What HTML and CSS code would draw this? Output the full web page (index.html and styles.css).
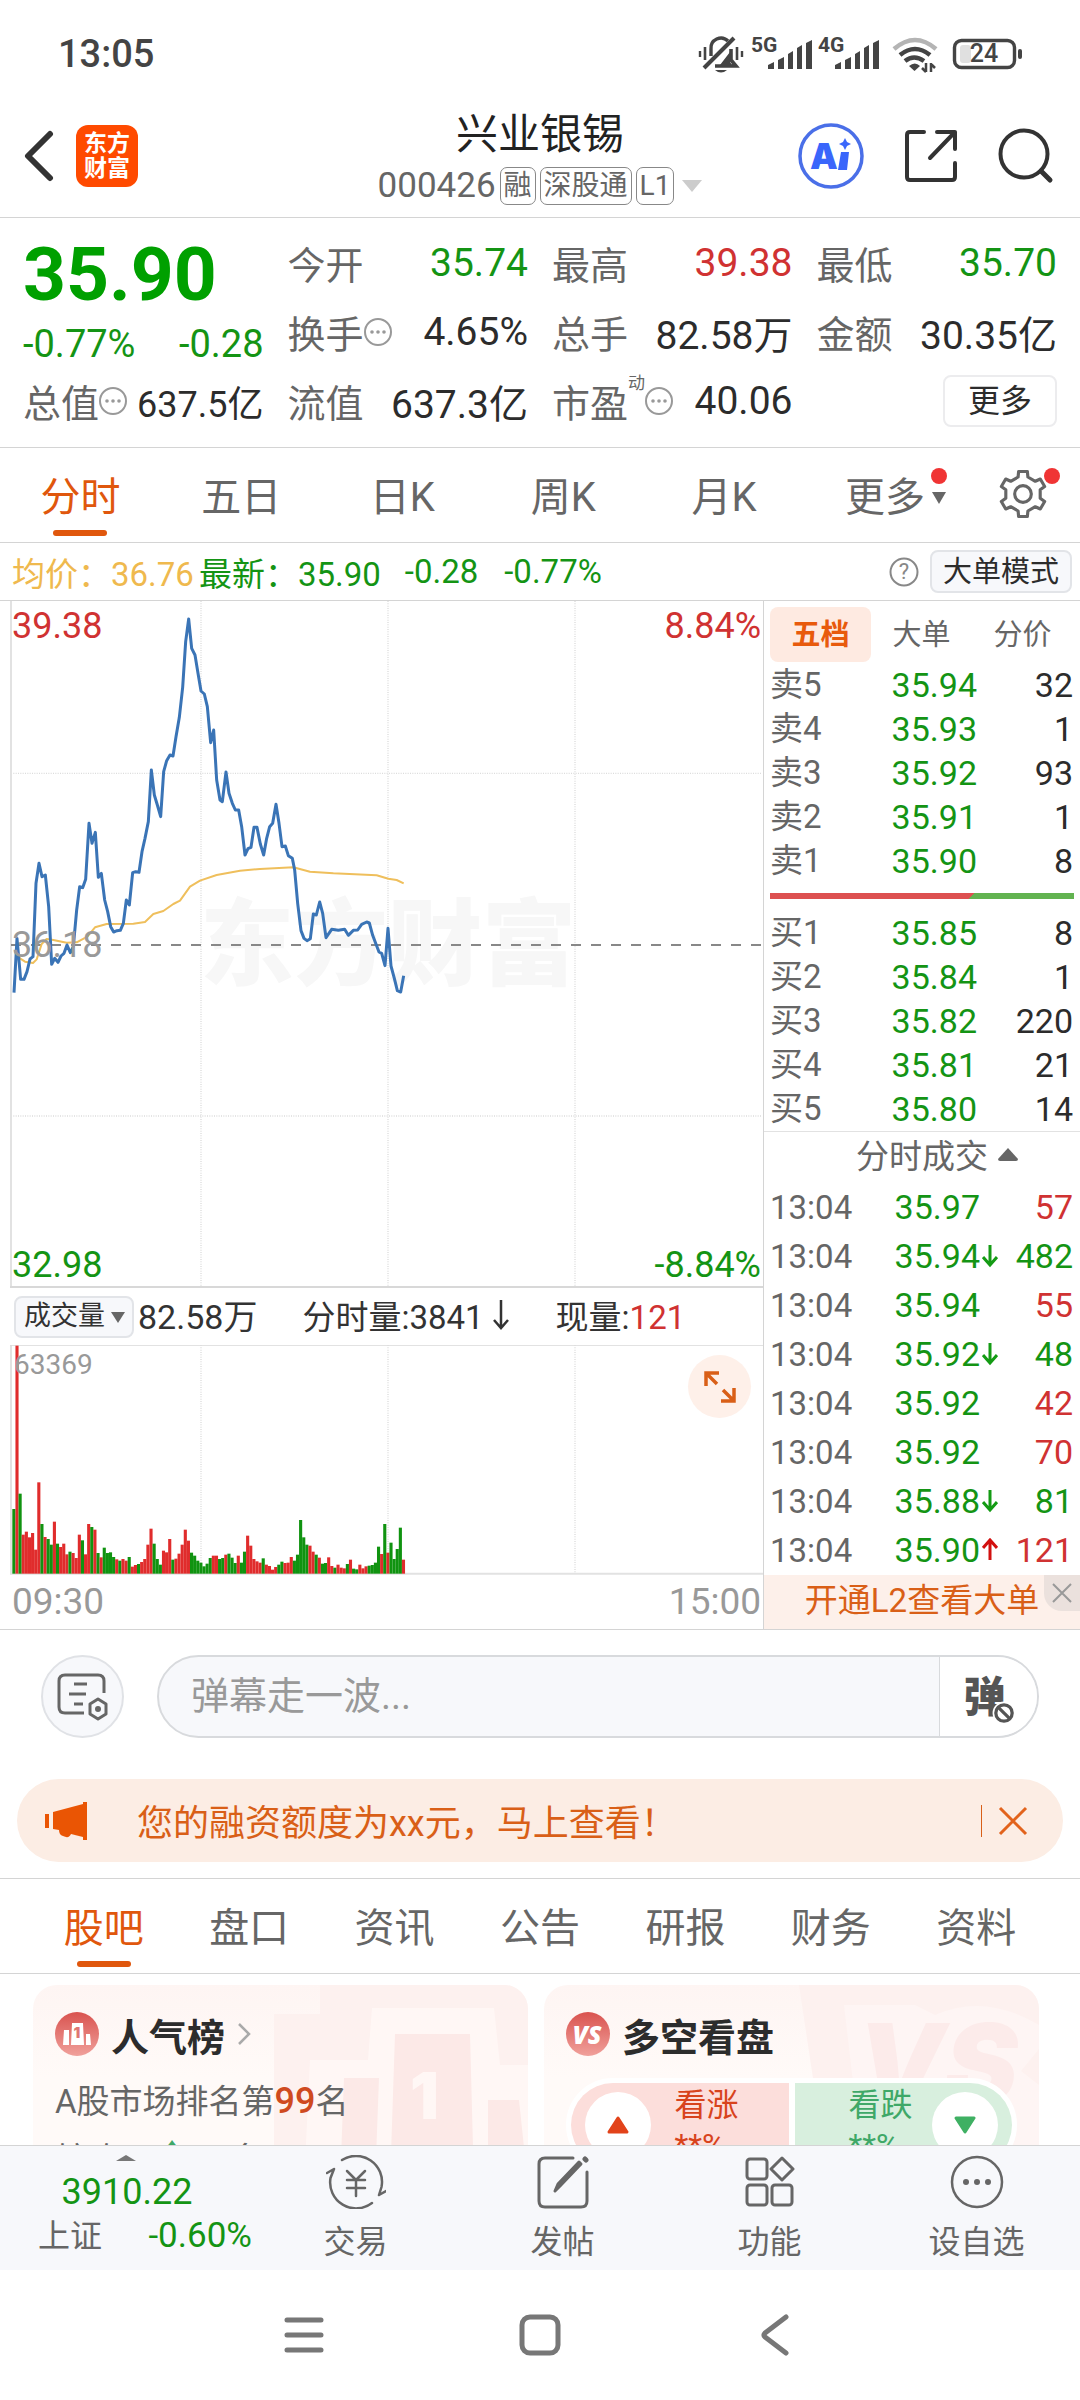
FILE: index.html
```html
<!DOCTYPE html>
<html lang="zh-CN">
<head>
<meta charset="utf-8">
<meta name="viewport" content="width=device-width, initial-scale=1">
<title>兴业银锡 000426</title>
<link rel="stylesheet" href="styles.css">
</head>
<body>
<div class="app">

  <div class="status">
    <span class="status-time">13:05</span>
    <svg class="status-icons" viewBox="0 0 330 40" width="330" height="40" aria-label="静音 5G 4G Wi-Fi 电量24">
      <g fill="none" stroke="#444" stroke-width="3.4" stroke-linecap="butt">
        <path d="M15 22 V15 A10 10 0 0 1 32 7"/>
        <path d="M8 34 L38 4" stroke-width="4"/>
        <path d="M35 15 V26 L40 32 H19" stroke-width="3.600"/>
        <path d="M9 13 v13 M41 13 v13" stroke-width="2.600"/>
        <path d="M4 17 v6 M46 17 v6" stroke-width="2.400"/>
      </g>
      <path d="M34 18 V28 L36 31 H24Z" fill="#444"/>
      <path d="M19 36 h12 q-6 5 -12 0z" fill="#444"/>
      <text x="55" y="18" class="net">5G</text>
      <g fill="#444">
        <path d="M72 31 l6 -3 v7 h-6z M82 26 l6 -3 v12 h-6z M92 20 l5 -3 v18 h-5z M101 14 l5 -3 v24 h-5z M110 9 l6 -3 v29 h-6z"/>
        <path d="M139 31 l6 -3 v7 h-6z M149 26 l6 -3 v12 h-6z M159 20 l5 -3 v18 h-5z M168 14 l5 -3 v24 h-5z M177 9 l6 -3 v29 h-6z"/>
      </g>
      <text x="122" y="18" class="net">4G</text>
      <g fill="none" stroke-width="4.500">
        <path d="M198 15 Q219 -3 240 15" stroke="#b4b4b4"/>
        <path d="M204 21 Q219 9 234 21 M209 27 Q218 20 228 27" stroke="#444"/>
      </g>
      <path d="M213 32 q6 -5 11 0 l-5.500 5z" fill="#444"/>
      <path d="M230 29 v9 M235 29 v9 M226 34 l4 4 M239 34 l-4 -4" stroke="#444" stroke-width="2.500"/>
      <rect x="258.500" y="6.500" width="60" height="27" rx="7" fill="none" stroke="#444" stroke-width="3.400"/>
      <rect x="264" y="11" width="11" height="18" rx="3" fill="#e0e0e0"/>
      <rect x="322" y="15" width="4" height="10" rx="2" fill="#444"/>
      <text x="288" y="28" text-anchor="middle" class="bat">24</text>
    </svg>
  </div>

  <header class="header">
    <div class="header-left">
      <button class="plain" aria-label="返回">
        <svg width="32" height="52" viewBox="0 0 32 52"><path d="M28 4 L6 26 L28 48" fill="none" stroke="#333" stroke-width="6" stroke-linecap="round" stroke-linejoin="round"/></svg>
      </button>
      <a class="logo" href="#">东方<br>财富</a>
    </div>
    <div class="header-title">
      <h1>兴业银锡</h1>
      <div class="code">
        <span>000426</span><span class="tag">融</span><span class="tag">深股通</span><span class="tag">L1</span>
        <svg width="20" height="12" viewBox="0 0 20 12"><path d="M0 0 H20 L10 12Z" fill="#ccc"/></svg>
      </div>
    </div>
    <div class="header-right">
      <button class="plain" aria-label="AI">
        <svg width="66" height="66" viewBox="0 0 66 66">
          <circle cx="33" cy="33" r="31" fill="none" stroke="#4a6fe8" stroke-width="3.500"/>
          <text x="12" y="46" class="ai">A</text>
          <path d="M43 29 h8 l-2 18 h-9z M47 15 l2 4 4 2 -4 2 -2 4 -2 -4 -4 -2 4 -2z" fill="#3a66fb"/>
        </svg>
      </button>
      <button class="plain" aria-label="分享">
        <svg width="54" height="54" viewBox="0 0 54 54" fill="none" stroke="#333" stroke-width="4" stroke-linecap="round" stroke-linejoin="round">
          <path d="M20 3 H6 Q3 3 3 6 V48 Q3 51 6 51 H48 Q51 51 51 48 V34"/>
          <path d="M33 3 H51 V20 M51 3 L26 29"/>
        </svg>
      </button>
      <button class="plain" aria-label="搜索">
        <svg width="56" height="56" viewBox="0 0 56 56" fill="none" stroke="#333" stroke-width="4" stroke-linecap="round">
          <circle cx="26" cy="26" r="23.500"/><path d="M43 43 L52 52" stroke-width="5"/>
        </svg>
      </button>
    </div>
  </header>

  <main class="content">
    <section class="quote">
      <div class="price-block">
        <strong class="last down">35.90</strong>
        <div class="chg down"><span>-0.77%</span><span>-0.28</span></div>
      </div>
      <div class="kv"><span class="k">今开</span><span class="down">35.74</span></div>
      <div class="kv"><span class="k">最高</span><span class="up">39.38</span></div>
      <div class="kv"><span class="k">最低</span><span class="down">35.70</span></div>
      <div class="kv"><span class="k">换手<svg class="info" viewBox="0 0 28 28"><use href="#i-info"/></svg></span><span>4.65%</span></div>
      <div class="kv"><span class="k">总手</span><span>82.58万</span></div>
      <div class="kv"><span class="k">金额</span><span>30.35亿</span></div>
      <div class="kv tight"><span class="k">总值<svg class="info" viewBox="0 0 28 28"><use href="#i-info"/></svg></span><span>637.5亿</span></div>
      <div class="kv"><span class="k">流值</span><span>637.3亿</span></div>
      <div class="kv"><span class="k">市盈<sup>动</sup><svg class="info" viewBox="0 0 28 28"><use href="#i-info"/></svg></span><span>40.06</span></div>
      <div class="more-cell"><button class="more-btn">更多</button></div>
    </section>

    <nav class="periods">
      <button class="tab active">分时</button>
      <button class="tab">五日</button>
      <button class="tab">日K</button>
      <button class="tab">周K</button>
      <button class="tab">月K</button>
      <button class="tab more">更多<span class="more-marks"><i class="dot"></i><svg width="14" height="12" viewBox="0 0 14 12"><path d="M0 0 H14 L7 12Z" fill="#666"/></svg></span></button>
      <button class="tab gear" aria-label="设置">
        <svg width="50" height="50" viewBox="0 0 48 48" fill="none" stroke="#666" stroke-width="3" stroke-linejoin="round">
          <path d="M28.200 2.400 L28.700 7.700 L35.800 11.800 L40.600 9.600 L44.800 16.800 L40.500 19.900 V28.100 L44.800 31.200 L40.600 38.400 L35.800 36.200 L28.700 40.300 L28.200 45.600 H19.800 L19.300 40.300 L12.200 36.200 L7.400 38.400 L3.200 31.200 L7.500 28.100 V19.900 L3.200 16.800 L7.400 9.600 L12.200 11.800 L19.300 7.700 L19.800 2.400Z"/>
          <circle cx="24" cy="24" r="8"/>
        </svg>
        <i class="dot"></i>
      </button>
    </nav>

    <div class="legend">
      <span class="avg">均价：36.76</span>
      <span class="down latest">最新：35.90</span>
      <span class="down">-0.28</span>
      <span class="down">-0.77%</span>
      <svg class="help" width="30" height="30" viewBox="0 0 30 30"><circle cx="15" cy="15" r="13.500" fill="none" stroke="#888" stroke-width="2"/><text x="15" y="22" text-anchor="middle">?</text></svg>
      <button class="mode-btn">大单模式</button>
    </div>

    <section class="board">
      <div class="charts">
        <div class="price-chart">
          <span class="watermark" aria-hidden="true">东方财富</span>
          <svg viewBox="30 33 2259 2061" preserveAspectRatio="none">
            <g fill="none" stroke="#dcdcdc" stroke-width="4">
              <path d="M603 33 V2094 M1164 33 V2094 M1725 33 V2094" stroke-dasharray="3 4"/>
              <path d="M33 550 H2286 M33 1578 H2286" stroke-dasharray="3 4"/>
              <path d="M33 33 V2094" stroke-width="6" stroke="#e2e2e2"/>
              <path d="M30 2091 H2289" stroke-width="6" stroke="#d8d8d8"/>
            </g>
            <path d="M33 1065 H2286" stroke="#888" stroke-width="6" stroke-dasharray="30 30"/>
            <polyline id="avg-line" fill="none" stroke="#efbf5c" stroke-width="6" stroke-linejoin="round"/>
            <polyline id="price-line" fill="none" stroke="#3a74b6" stroke-width="9" stroke-linejoin="round"/>
          </svg>
          <span class="mark top-left up">39.38</span>
          <span class="mark top-right up">8.84%</span>
          <span class="mark mid">36.18</span>
          <span class="mark bottom-left down">32.98</span>
          <span class="mark bottom-right down">-8.84%</span>
        </div>
        <div class="vol-head">
          <span class="picker">
            <select aria-label="指标"><option>成交量</option></select>
            <svg width="14" height="11" viewBox="0 0 14 11"><path d="M0 0 H14 L7 11Z" fill="#666"/></svg>
          </span>
          <span class="v v1">82.58万</span>
          <span class="v v2">分时量:3841<svg width="16" height="30" viewBox="0 0 16 30" fill="none" stroke="#333" stroke-width="2.500"><path d="M8 0 V27 M1 20 L8 28 L15 20"/></svg></span>
          <span class="v v3">现量:<b class="up">121</b></span>
        </div>
        <div class="vol-chart">
          <svg id="vol" viewBox="30 226 2259 690" preserveAspectRatio="none">
            <g fill="none" stroke="#dcdcdc">
              <path d="M603 226 V912 M1164 226 V912 M1725 226 V912" stroke-width="4" stroke-dasharray="3 4"/>
              <path d="M33 226 V912" stroke-width="6" stroke="#e2e2e2"/>
              <path d="M30 227 H2289" stroke-width="3"/>
              <path d="M30 912 H2289" stroke-width="6" stroke="#e2e2e2"/>
            </g>
          </svg>
          <span class="mark vol-max">63369</span>
          <button class="expand" aria-label="全屏">
            <svg width="32" height="32" viewBox="0 0 32 32" fill="none" stroke="#d95f17" stroke-width="3.500"><path d="M2 15 V2 H15 M3 3 L13 13 M30 17 V30 H17 M29 29 L19 19"/></svg>
          </button>
        </div>
        <div class="axis"><span>09:30</span><span>15:00</span></div>
      </div>

      <aside class="side">
        <div class="side-tabs">
          <button class="on">五档</button><button>大单</button><button>分价</button>
        </div>
        <table class="book">
          <tbody>
            <tr><th>卖5</th><td class="down">35.94</td><td>32</td></tr>
            <tr><th>卖4</th><td class="down">35.93</td><td>1</td></tr>
            <tr><th>卖3</th><td class="down">35.92</td><td>93</td></tr>
            <tr><th>卖2</th><td class="down">35.91</td><td>1</td></tr>
            <tr><th>卖1</th><td class="down">35.90</td><td>8</td></tr>
          </tbody>
        </table>
        <div class="ratio"></div>
        <table class="book">
          <tbody>
            <tr><th>买1</th><td class="down">35.85</td><td>8</td></tr>
            <tr><th>买2</th><td class="down">35.84</td><td>1</td></tr>
            <tr><th>买3</th><td class="down">35.82</td><td>220</td></tr>
            <tr><th>买4</th><td class="down">35.81</td><td>21</td></tr>
            <tr><th>买5</th><td class="down">35.80</td><td>14</td></tr>
          </tbody>
        </table>
        <button class="ticks-title">分时成交<svg width="20" height="13" viewBox="0 0 20 13"><path d="M10 0 L20 11 Q20 13 18 13 H2 Q0 13 0 11Z" fill="#666"/></svg></button>
        <table class="ticks">
          <tbody>
            <tr><th>13:04</th><td class="down">35.97<i></i></td><td class="up">57</td></tr>
            <tr><th>13:04</th><td class="down">35.94<i><svg class="arr"><use href="#i-down"/></svg></i></td><td class="down">482</td></tr>
            <tr><th>13:04</th><td class="down">35.94<i></i></td><td class="up">55</td></tr>
            <tr><th>13:04</th><td class="down">35.92<i><svg class="arr"><use href="#i-down"/></svg></i></td><td class="down">48</td></tr>
            <tr><th>13:04</th><td class="down">35.92<i></i></td><td class="up">42</td></tr>
            <tr><th>13:04</th><td class="down">35.92<i></i></td><td class="up">70</td></tr>
            <tr><th>13:04</th><td class="down">35.88<i><svg class="arr"><use href="#i-down"/></svg></i></td><td class="down">81</td></tr>
            <tr><th>13:04</th><td class="down">35.90<i><svg class="arr"><use href="#i-up"/></svg></i></td><td class="up">121</td></tr>
          </tbody>
        </table>
        <div class="l2">
          <a href="#">开通L2查看大单</a>
          <button class="l2-close" aria-label="关闭"><svg width="20" height="20" viewBox="0 0 20 20"><path d="M1 1 L19 19 M19 1 L1 19" stroke="#999" stroke-width="2"/></svg></button>
        </div>
      </aside>
    </section>

    <div class="danmu">
      <button class="danmu-set" aria-label="弹幕设置">
        <svg width="52" height="48" viewBox="0 0 52 48" fill="none" stroke="#666" stroke-width="3">
          <path d="M27 40 H8 Q2 40 2 34 V8 Q2 2 8 2 H41 Q47 2 47 8 V20"/>
          <path d="M17 11 H30 M12 21 H29 M17 31 H26"/>
          <path d="M41 26 L49 31 V41 L41 46 L33 41 V31Z" stroke-linejoin="round"/>
          <circle cx="41" cy="36" r="3" fill="#666" stroke="none"/>
        </svg>
      </button>
      <div class="danmu-bar">
        <input type="text" placeholder="弹幕走一波..." aria-label="弹幕">
        <button aria-label="弹幕开关">弹<svg width="24" height="24" viewBox="0 0 22 22" fill="none"><circle cx="11" cy="11" r="10.500" fill="#fff"/><g stroke="#555" stroke-width="3"><circle cx="11" cy="11" r="7.500"/><path d="M6 6 L16 16"/></g></svg></button>
      </div>
    </div>

    <div class="notice">
      <svg width="42" height="38" viewBox="0 0 42 38" fill="#ea5504"><path d="M0 12 H4 V26 H0Z M8 10 L38 2 V0 H42 V38 H38 V35 L26 32 Q24 37 18 34 Q14 33 14 28 L8 27Z"/></svg>
      <a href="#">您的融资额度为xx元，马上查看！</a>
      <i class="bar"></i>
      <button class="plain" aria-label="关闭"><svg width="30" height="30" viewBox="0 0 30 30"><path d="M2 2 L28 28 M28 2 L2 28" stroke="#e2631c" stroke-width="3"/></svg></button>
    </div>

    <nav class="sections">
      <button class="tab active">股吧</button>
      <button class="tab">盘口</button>
      <button class="tab">资讯</button>
      <button class="tab">公告</button>
      <button class="tab">研报</button>
      <button class="tab">财务</button>
      <button class="tab">资料</button>
    </nav>

    <section class="cards">
      <article class="card">
        <svg class="deco" width="254" height="200" viewBox="0 0 254 200" aria-hidden="true">
          <path d="M0 200 V29 H46 V0 H254 V200Z" fill="#fdf1ef"/>
          <path d="M30 200 L36 75 H94 L98 23 H220 L226 80 H254 V200Z" fill="#fff7f5"/>
          <path d="M116 200 L121 49 H196 L200 200Z M66 200 L70 93 H105 L101 200Z M214 200 V115 H245 L254 200Z" fill="#fce9e7"/>
          <text x="136" y="134" class="deco-one">1</text>
        </svg>
        <h2>
          <svg width="44" height="44" viewBox="0 0 44 44"><circle cx="22" cy="22" r="22" fill="url(#g-red)"/><path d="M9 18 H14 V33 H8Z M17 11 H28 L29 33 H16Z M31 22 H35 L36 33 H31Z" fill="#fff"/><text x="22" y="26" text-anchor="middle" class="mini-one">1</text></svg>
          人气榜
          <svg class="chev" width="14" height="24" viewBox="0 0 14 24"><path d="M2 2 L12 12 L2 22" fill="none" stroke="#aaa" stroke-width="2.500"/></svg>
        </h2>
        <p>A股市场排名第<b>99</b>名</p>
        <p>较昨日<b class="rise">↑77</b>名</p>
      </article>
      <article class="card">
        <svg class="deco" width="254" height="200" viewBox="0 0 254 200" aria-hidden="true">
          <path d="M14 0 H254 V200 H44Z" fill="#fdf1ef"/>
          <path d="M59 20 L130 20 L150 30 Q200 8 254 40 V64 L236 86 L254 100 V200 H80Z" fill="#fef5f4"/>
          <text x="72" y="118" class="deco-vs">VS</text>
        </svg>
        <h2>
          <svg width="44" height="44" viewBox="0 0 44 44"><circle cx="22" cy="22" r="22" fill="url(#g-red)"/><text x="21" y="32" text-anchor="middle" class="mini-vs">VS</text></svg>
          多空看盘
        </h2>
        <div class="vote">
          <button class="bull"><span class="disc"><svg width="22" height="18" viewBox="0 0 22 18"><path d="M11 2 L20 16 H2Z" fill="#e2431a" stroke="#e2431a" stroke-width="3" stroke-linejoin="round"/></svg></span><span class="vt">看涨<br>**%</span></button>
          <button class="bear"><span class="vt">看跌<br>**%</span><span class="disc"><svg width="22" height="18" viewBox="0 0 22 18"><path d="M11 16 L20 2 H2Z" fill="#3fb063" stroke="#3fb063" stroke-width="3" stroke-linejoin="round"/></svg></span></button>
        </div>
      </article>
    </section>
  </main>

  <footer class="dock">
    <a class="index" href="#">
      <svg width="20" height="6" viewBox="0 0 20 6"><path d="M0 6 L10 0 L20 6Z" fill="#777"/></svg>
      <span class="idx-val down">3910.22</span>
      <span class="idx-row"><span>上证</span><span class="down">-0.60%</span></span>
    </a>
    <a href="#">
      <svg width="60" height="54" viewBox="0 0 60 54" fill="none" stroke="#666" stroke-width="2.500" stroke-linecap="round" stroke-linejoin="round">
        <path d="M16 5 A26 26 0 0 1 55.500 32 L53 40 L60 36"/>
        <path d="M46 48 A26 26 0 0 1 4.500 23 L8 14 L1 18"/>
        <path d="M21 16 L30 25 L39 16 M30 25 V41 M21 25 H39 M21 33 H39"/>
      </svg>
      交易</a>
    <a href="#">
      <svg width="52" height="54" viewBox="0 0 52 54" fill="none" stroke="#666" stroke-width="3" stroke-linecap="round">
        <path d="M36 3 H8 Q2 3 2 9 V46 Q2 52 8 52 H44 Q50 52 50 46 V17"/>
        <path d="M44 9 L23 31 L18 36 L21 29 L42 7Z" stroke-linejoin="round" fill="#666"/><path d="M48 4 L49 5" stroke-width="5"/>
      </svg>
      发帖</a>
    <a href="#">
      <svg width="50" height="54" viewBox="0 0 50 54" fill="none" stroke="#666" stroke-width="3" stroke-linejoin="round">
        <rect x="2" y="4" width="20" height="20" rx="3"/><rect x="2" y="30" width="20" height="20" rx="3"/><rect x="27" y="30" width="20" height="20" rx="3"/>
        <path d="M37 3 L48 14 L37 25 L26 14Z"/>
      </svg>
      功能</a>
    <a href="#">
      <svg width="54" height="54" viewBox="0 0 54 54"><circle cx="27" cy="27" r="25" fill="none" stroke="#666" stroke-width="2.500"/><g fill="#666"><circle cx="16" cy="27" r="3"/><circle cx="27" cy="27" r="3"/><circle cx="38" cy="27" r="3"/></g></svg>
      设自选</a>
  </footer>

  <div class="sysnav">
    <button class="plain" aria-label="最近任务"><svg width="40" height="40" viewBox="0 0 40 40"><path d="M3 5 H37 M3 20 H37 M3 35 H37" stroke="#777" stroke-width="5" stroke-linecap="round"/></svg></button>
    <button class="plain" aria-label="主屏幕"><svg width="42" height="42" viewBox="0 0 42 42"><rect x="3" y="3" width="36" height="36" rx="8" fill="none" stroke="#777" stroke-width="5"/></svg></button>
    <button class="plain" aria-label="返回上一级"><svg width="40" height="42" viewBox="0 0 40 42"><path d="M30 3 L9 19 Q7 21 9 23 L30 39" fill="none" stroke="#777" stroke-width="5" stroke-linecap="round" stroke-linejoin="round"/></svg></button>
  </div>
</div>

<svg width="0" height="0" class="defs" aria-hidden="true">
  <defs>
    <linearGradient id="g-red" x1="0" y1="0" x2="0" y2="1"><stop offset="0" stop-color="#d9534f"/><stop offset="1" stop-color="#f0a09b"/></linearGradient>
    <g id="i-info"><circle cx="14" cy="14" r="13" fill="none" stroke="#999" stroke-width="2"/><g fill="#999"><circle cx="8" cy="14" r="1.800"/><circle cx="14" cy="14" r="1.800"/><circle cx="20" cy="14" r="1.800"/></g></g>
    <path id="i-down" d="M8 1 V20 M1 13 L8 21 L15 13" fill="none" stroke="#149b14" stroke-width="3"/>
    <path id="i-up" d="M8 22 V3 M1 10 L8 2 L15 10" fill="none" stroke="#d2100f" stroke-width="3"/>
  </defs>
</svg>
<script src="chart.js"></script>
</body>
</html>
```
FILE: styles.css
```css
* { box-sizing: border-box; }

body {
  margin: 0;
  background: #fff;
  color: #2c2c2c;
  font-family: Roboto, "Noto Sans CJK SC", sans-serif;
  font-size: 32px;
}

button, input, select { font: inherit; color: inherit; }
button { border: 0; background: none; padding: 0; margin: 0; cursor: pointer; }
a { color: inherit; text-decoration: none; }
svg { display: block; flex: none; }
i { font-style: normal; }
h1, h2, p { margin: 0; font-weight: 400; }

.up { color: #d03232; }
.down { color: #149414; }
.plain { display: flex; }
.defs { position: absolute; }

.app { display: flex; flex-direction: column; height: 100vh; }

/* status bar */
.status { display: flex; justify-content: space-between; align-items: center; height: 108px; padding: 0 54px 0 58px; color: #444; }
.status-time { font-size: 38px; font-weight: 500; }
.net { font: 700 21px Roboto, sans-serif; fill: #444; }
.bat { font: 500 25px Roboto, sans-serif; fill: #444; }

/* header */
.header { display: grid; grid-template-columns: 1fr auto 1fr; height: 110px; border-bottom: 1px solid #d4d4d4; }
.header-left { display: flex; align-items: center; gap: 22px; padding: 0 0 14px 22px; }
.logo { width: 62px; height: 62px; padding-top: 6px; border-radius: 12px; background: #ff4a00; color: #fff; font-size: 23px; font-weight: 700; line-height: 25px; text-align: center; }
.header-title { display: flex; flex-direction: column; align-items: center; }
.header-title h1 { font-size: 42px; line-height: 54px; color: #222; }
.code { display: flex; align-items: center; gap: 4px; margin-top: 4px; color: #666; font-size: 35px; line-height: 40px; }
.tag { height: 38px; padding: 0 3px; border: 1px solid #888; border-radius: 7px; font-size: 28px; line-height: 35px; }
.code svg { margin-left: 4px; }
.header-right { display: flex; justify-content: flex-end; align-items: center; gap: 40px; padding: 0 26px 14px 0; }
.ai { font: 900 35px Inter, sans-serif; fill: #3a66fb; }

.content { flex: 1; min-height: 0; overflow: hidden; }

/* quote summary */
.quote { display: grid; grid-template-columns: repeat(4, minmax(0, 1fr)); grid-auto-rows: 69px; column-gap: 24px; height: 230px; padding: 10px 23px 0; border-bottom: 1px solid #d4d4d4; }
.price-block { grid-row: span 2; display: flex; flex-direction: column; }
.last { font-size: 75px; font-weight: 700; line-height: 92px; color: #00a000; }
.chg { display: flex; justify-content: space-between; font-size: 38px; line-height: 48px; }
.kv { display: flex; justify-content: space-between; align-items: center; font-size: 39px; white-space: nowrap; }
.k { display: flex; align-items: center; color: #666; font-size: 38px; }
.kv.tight { font-size: 36px; }
.info { width: 28px; height: 28px; }
.k sup { align-self: flex-start; font-size: 17px; line-height: 20px; }
.more-cell { display: flex; justify-content: flex-end; align-items: center; }
.more-btn { width: 114px; height: 52px; border: 2px solid #ececee; border-radius: 8px; font-size: 32px; line-height: 46px; }

/* tab bars */
.tab { position: relative; padding-bottom: 2px; font-size: 40px; color: #666; }
.tab.active { color: #e0570d; }
.tab.active::after { content: ""; position: absolute; left: 50%; bottom: 6px; width: 54px; height: 6px; margin-left: -27px; border-radius: 3px; background: #e0570d; }
.periods { display: grid; grid-template-columns: repeat(6, 149fr) 106fr; height: 95px; border-bottom: 1px solid #d4d4d4; }
.periods .more { display: flex; justify-content: center; align-items: center; gap: 6px; padding-left: 22px; }
.more-marks { display: flex; flex-direction: column; align-items: center; gap: 8px; padding-bottom: 16px; }
.periods .gear { display: flex; justify-content: center; align-items: center; }
.dot { width: 16px; height: 16px; border-radius: 50%; background: #f03434; }
.gear .dot { position: absolute; top: 20px; right: 20px; }

.legend { display: flex; align-items: center; height: 58px; padding: 0 8px 0 12px; border-bottom: 1px solid #d4d4d4; font-size: 33px; white-space: nowrap; }
.avg { color: #efb94e; }
.latest { margin: 0 24px 0 5px; }
.latest + .down { margin-right: 26px; }
.help { margin: 0 11px 0 auto; }
.help text { font: 22px Roboto, sans-serif; fill: #888; }
.mode-btn { width: 142px; height: 43px; border: 2px solid #e2e4e8; border-radius: 8px; background: #f7f8fb; font-size: 29px; line-height: 36px; }

/* chart and order book */
.board { display: grid; grid-template-columns: minmax(0, 1fr) 317px; border-bottom: 1px solid #d4d4d4; }
.charts { display: flex; flex-direction: column; padding-left: 10px; }
.price-chart { position: relative; height: 687px; }
.price-chart svg, .vol-chart > svg { position: relative; width: 100%; height: 100%; }
.watermark { position: absolute; left: 190px; top: 290px; font-size: 94px; font-weight: 900; line-height: 110px; color: #f7f7f7; }
.mark { position: absolute; font-size: 36px; line-height: 40px; }
.top-left { left: 2px; top: 5px; }
.top-right { right: 2px; top: 5px; }
.mid { left: 2px; top: 324px; color: #999; }
.bottom-left { left: 2px; bottom: 3px; }
.bottom-right { right: 2px; bottom: 3px; }
.vol-head { display: flex; align-items: center; height: 57px; padding-left: 4px; font-size: 33px; white-space: nowrap; color: #333; }
.picker { position: relative; }
.picker select { display: block; appearance: none; width: 120px; height: 42px; padding: 0 0 2px 8px; border: 2px solid #e2e4e8; border-radius: 8px; background: #f7f8fb; font-size: 27px; }
.picker svg { position: absolute; right: 9px; top: 16px; }
.v { padding-bottom: 4px; }
.v1 { margin-left: 4px; font-size: 34px; }
.v2 { display: flex; align-items: center; gap: 9px; margin-left: 45px; }
.v3 { margin-left: 47px; }
.v3 b { font-weight: 400; }
.vol-chart { position: relative; height: 230px; }
.vol-max { left: 4px; top: 0; font-size: 28px; color: #999; }
.expand { position: absolute; right: 12px; top: 10px; display: flex; justify-content: center; align-items: center; width: 63px; height: 63px; border-radius: 50%; background: #fef0e9; }
.axis { display: flex; justify-content: space-between; padding: 0 2px; font-size: 37px; line-height: 54px; color: #999; }

.side { border-left: 1px solid #d4d4d4; }
.side-tabs { display: flex; height: 62px; padding: 6px 0 0 6px; }
.side-tabs button { width: 101px; height: 55px; border-radius: 8px; font-size: 29px; line-height: 48px; color: #666; }
.side-tabs .on { background: #feeae1; color: #e85a0c; font-weight: 700; }
.side table { width: 100%; table-layout: fixed; border-collapse: collapse; font-size: 34px; }
.side th, .side td { padding: 0; font-weight: 400; white-space: nowrap; }
.side th { width: 100px; padding-left: 6px; text-align: left; color: #666; font-size: 33px; }
.side td { text-align: right; }
.side td:last-child { width: 82px; padding-right: 7px; }
.book td:nth-child(2) { padding-right: 21px; }
.book tr { height: 44px; line-height: 44px; }
.ticks tr { height: 49px; line-height: 49px; }
.ticks i { display: inline-block; width: 18px; padding-left: 2px; }
.arr { width: 16px; height: 24px; }
.ratio { height: 6px; margin: 10px 6px 12px; background: linear-gradient(135deg, #dd5050 66%, #62b350 66%); }
.ticks-title { display: flex; justify-content: center; align-items: center; gap: 10px; width: 100%; height: 52px; padding: 0 0 7px 30px; border-top: 1px solid #e2e2e2; font-size: 33px; color: #666; }
.l2 { display: flex; position: relative; justify-content: center; height: 54px; background: #fdf0ea; color: #d95f17; font-size: 33px; line-height: 52px; }
.l2-close { position: absolute; top: 0; right: 0; display: flex; justify-content: center; align-items: center; width: 36px; height: 36px; border-bottom-left-radius: 18px; background: #ebe1dd; }

/* comment bar */
.danmu { display: flex; gap: 33px; padding: 25px 41px 0; }
.danmu-set { display: flex; justify-content: center; align-items: center; width: 83px; height: 83px; border: 2px solid #e0e2e6; border-radius: 50%; background: #f7f8fb; }
.danmu-bar { display: flex; flex: 1; height: 83px; border: 2px solid #d8dadd; border-radius: 42px; background: #f7f8fb; overflow: hidden; }
.danmu-bar input { flex: 1; min-width: 0; padding: 0 0 2px 32px; border: 0; background: none; font-size: 38px; }
.danmu-bar input::placeholder { color: #999; opacity: 1; }
.danmu-bar button { position: relative; width: 98px; border-left: 1px solid #d8dadd; background: #fff; padding: 0 8px 6px 0; font-size: 42px; font-weight: 900; color: #555; }
.danmu-bar button svg { position: absolute; left: 52px; top: 44px; }

.notice { display: flex; align-items: center; height: 83px; margin: 41px 17px 16px; padding: 0 35px 0 28px; border-radius: 42px; background: #fcede4; color: #d95f17; font-size: 36px; }
.notice a { margin-left: 50px; padding-bottom: 2px; }
.bar { width: 1px; height: 32px; margin: 0 16px 0 auto; background: #d95f17; }

.sections { display: grid; grid-template-columns: repeat(7, 1fr); height: 96px; padding: 0 31px; border-top: 1px solid #d4d4d4; border-bottom: 1px solid #d4d4d4; }

/* cards */
.cards { display: grid; grid-template-columns: 1fr 1fr; gap: 16px; padding: 11px 41px 0 33px; }
.card { position: relative; height: 230px; padding: 24px 22px; border-radius: 24px; background: linear-gradient(#fef5f3, #fffaf8 40%); overflow: hidden; }
.deco { position: absolute; right: 0; top: 0; }
.deco-one { font: 900 64px Inter, sans-serif; fill: #fff7f5; }
.deco-vs { font: italic 900 110px Inter, sans-serif; fill: #fcebea; }
.card h2 { position: relative; display: flex; align-items: center; gap: 12px; height: 50px; margin-bottom: 7px; font-size: 38px; font-weight: 700; }
.mini-one { font: 900 15px Inter, sans-serif; fill: #e07672; }
.mini-vs { font: italic 900 25px "Open Sans", sans-serif; fill: #fff; }
.card p { position: relative; padding-top: 13px; font-size: 33px; line-height: 44px; color: #666; }
.card p b { font-weight: 500; font-size: 36px; color: #cf4a20; }
.card p b.rise { color: #3fa868; }
.vote { position: relative; display: flex; gap: 6px; height: 94px; margin: 19px 0 0; border: 5px solid #fff; border-radius: 47px; overflow: hidden; background: #fff; }
.vote button { display: flex; flex: 1; align-items: center; justify-content: space-between; padding: 0 14px; font-size: 32px; line-height: 40px; text-align: left; }
.bull { background: #fcdedb; color: #d8431c; }
.bear { background: #d8efde; color: #3fa868; }
.disc { display: flex; justify-content: center; align-items: center; width: 66px; height: 66px; border-radius: 50%; background: #fff; }
.bull .vt { margin-right: 36px; }
.bear .vt { margin-left: 40px; }

/* bottom bars */
.dock { display: grid; grid-template-columns: 252fr 207fr 207fr 207fr 207fr; height: 125px; border-top: 1px solid #d4d4d4; background: #f7f8fb; color: #666; }
.dock a { display: flex; flex-direction: column; align-items: center; gap: 14px; padding-top: 9px; font-size: 32px; line-height: 38px; }
.dock .index { gap: 0; padding: 9px 0 0 38px; align-items: stretch; }
.index > svg { align-self: center; margin-right: 38px; }
.dock .idx-val { margin: 8px 36px 0 0; text-align: center; font-size: 36px; line-height: 46px; }
.dock .idx-row { display: flex; justify-content: space-between; line-height: 42px; }
.idx-row .down { font-size: 35px; }
.sysnav { display: grid; grid-template-columns: repeat(3, 1fr); height: 130px; padding: 0 186px; }
.sysnav button { justify-content: center; align-items: center; }
```
FILE: chart.js
```js
// Minute prices, as x,y pairs in the price chart's own units.
const price = "42,1208 51,1045 62,1168 72,1168 81,1145 90,1107 99,1100 108,880 117,820 126,860 136,855 146,950 155,1123 164,1105 174,1117 183,1098 192,1090 201,1065 211,1088 220,1070 230,960 239,890 248,893 257,868 267,700 276,760 286,727 295,862 304,850 314,930 323,965 332,1010 341,1026 351,1022 361,1021 370,1000 379,930 388,945 398,848 407,845 417,847 426,785 435,745 445,695 454,540 463,615 472,645 482,680 491,545 500,512 510,495 519,498 528,440 538,382 548,292 557,155 566,87 575,175 585,195 594,250 603,303 613,312 622,350 632,458 641,420 650,570 660,630 667,635 678,546 687,610 697,640 706,660 716,660 725,710 735,795 744,776 753,772 762,712 771,712 781,762 791,795 800,745 809,710 818,700 828,643 837,700 846,770 856,768 865,797 877,805 884,840 893,940 903,1022 912,1045 921,1052 931,1046 940,972 949,975 959,936 968,970 978,1043 995,1018 1015,1021 1034,1018 1045,1036 1060,1021 1073,1020 1085,1003 1100,996 1108,999 1118,1036 1127,1060 1137,1086 1145,1090 1155,1127 1164,1015 1173,1128 1183,1165 1192,1202 1202,1206 1211,1157";
const average = "45,1085 60,1105 75,1115 99,1119 110,1108 125,1062 140,1047 160,1050 200,1058 230,1057 262,1040 285,1012 320,1002 400,1001 435,996 460,972 490,963 520,942 540,932 570,890 600,872 650,855 720,842 780,837 880,832 930,845 1000,850 1130,856 1165,866 1190,870 1211,880";
document.getElementById("price-line").setAttribute("points", price);
document.getElementById("avg-line").setAttribute("points", average);

// One bar a minute: r for a rise, g for a fall, then the y of its top.
const bars = "g718 r228 g672 r795 r786 r803 r790 r840 r638 g763 r802 g808 g825 r756 g822 r832 r822 r854 g846 r850 r865 r795 g812 r854 r763 g772 r780 g850 r863 g834 g850 g848 g862 r869 g873 r868 r873 g862 r891 r886 g883 r877 r868 r825 r777 g822 g868 g885 r843 r848 r808 g870 r867 r852 r825 r780 r813 g849 g858 g873 g879 g890 g882 g865 r858 r858 g868 g865 r855 g852 g864 g880 r858 g879 g846 r798 r828 r868 r875 r879 g866 r885 r889 r900 r892 g885 g876 r880 r879 r862 g873 g855 g751 g803 g825 r828 r846 g855 r864 g882 g880 r863 r889 g894 r885 r894 r896 g883 r870 g897 g899 r885 r896 r890 g888 g886 g879 g831 r853 g763 r849 g819 g868 g838 g774 r870".split(" ");
const base = 912, first = 37, step = 9.35;
const vol = document.getElementById("vol");
bars.forEach((bar, i) => {
  const top = Number(bar.slice(1));
  const rect = document.createElementNS("http://www.w3.org/2000/svg", "rect");
  rect.setAttribute("x", first + i * step);
  rect.setAttribute("y", top);
  rect.setAttribute("width", step);
  rect.setAttribute("height", base - top);
  rect.setAttribute("fill", bar[0] === "r" ? "#e02c2c" : "#109310");
  vol.appendChild(rect);
});
```
